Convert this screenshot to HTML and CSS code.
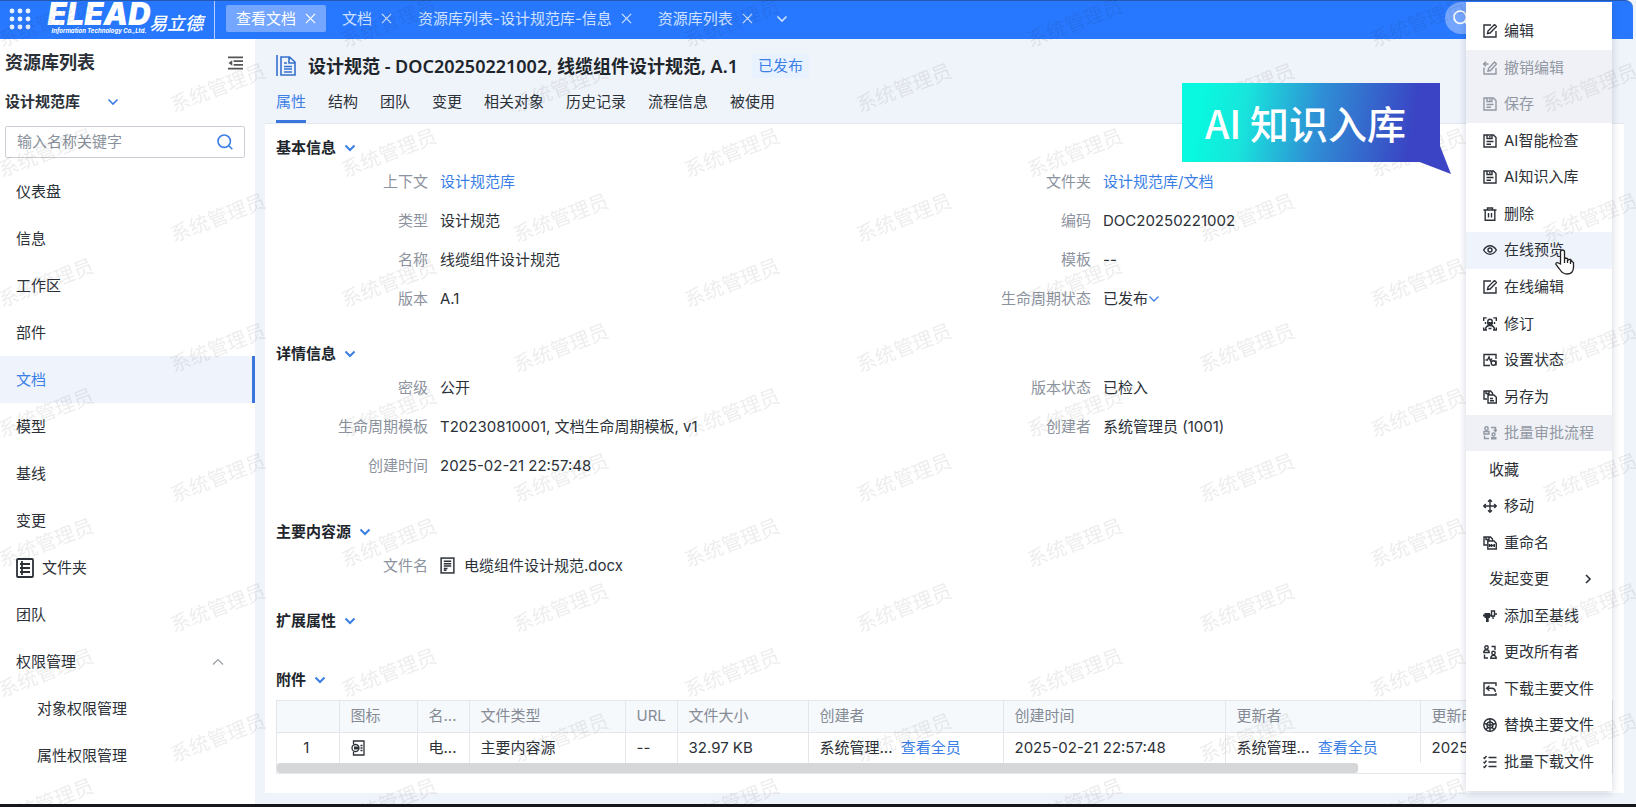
FILE: index.html
```html
<!DOCTYPE html>
<html lang="zh-CN">
<head>
<meta charset="utf-8">
<title>查看文档 - 易立德</title>
<link rel="stylesheet" href="styles.css">
</head>
<body>
<svg class="sprite" aria-hidden="true">
  <symbol id="i-down" viewBox="0 0 12 12"><path d="M1.5 3.5 6 8l4.500-4.500"/></symbol>
  <symbol id="i-up" viewBox="0 0 12 12"><path d="M1 8.500 6 3.500l5 5"/></symbol>
  <symbol id="i-right" viewBox="0 0 12 12"><path d="M4 2l4 4-4 4"/></symbol>
  <symbol id="i-x" viewBox="0 0 12 12"><path d="M1 1l10 10M11 1 1 11"/></symbol>
  <symbol id="i-search" viewBox="0 0 16 16"><circle cx="7.200" cy="7.200" r="6.200"/><path d="M11.800 11.800 15.300 15.300"/></symbol>
  <symbol id="i-edit" viewBox="0 0 14 14"><path d="M8 1H1v12h12V7M4.500 9.500 5 7l6.500-6.500 2 2L7 9z"/></symbol>
  <symbol id="i-undoedit" viewBox="0 0 14 14"><path d="M1 6.500V13h12V7M0.500 3h5M3 .8.600 3 3 5.200M5 10l.5-2.500 6-6.500 2 2L7.500 9.500z"/></symbol>
  <symbol id="i-save" viewBox="0 0 14 14"><path d="M1 1h9.500L13 3.500V13H1zM4 1v3.500h5V1M6.800 2v1.500M3.500 7.500h7M3.500 10.300h4.500"/></symbol>
  <symbol id="i-trash" viewBox="0 0 14 14"><path d="M.5 3h13M4.500 3V1h5v2M2.200 3v10.200h9.600V3M5.500 6v4.500M8.500 6v4.500"/></symbol>
  <symbol id="i-eye" viewBox="0 0 14 14"><path d="M.6 7C2.500 4 4.700 2.800 7 2.800S11.500 4 13.400 7C11.500 10 9.300 11.200 7 11.200S2.500 10 .6 7z"/><circle cx="7" cy="7" r="2"/></symbol>
  <symbol id="i-revise" viewBox="0 0 14 14"><path d="M.7 4V.9h3M10.300.9h3V4M.7 10.500V13H4M13.300 10.500V13H10M4.800 7V4.500a2.200 2.200 0 0 1 4.400 0V7M2.500 13c0-3 1-4.500 4.500-4.500s4.500 1.500 4.500 4.500M2.500 5v2M11.500 5v2M5.500 11.500h3"/><path class="solid" d="M4.500 5h5v4h-5z"/></symbol>
  <symbol id="i-state" viewBox="0 0 14 14"><path d="M13 6V1.500H1v11h6M2.500 7h2L6 4l1.500 4L9 5.500"/><circle cx="10.500" cy="10" r="2.300"/><path d="M13 7.500v5"/></symbol>
  <symbol id="i-copy" viewBox="0 0 14 14"><path d="M4 9H1V1h6.500L9.500 3v1.500M3 1v2.500h3V1M5 5h6l2.300 2.300V13H5zM7 8.500h3M7 10.800h4"/></symbol>
  <symbol id="i-rename" viewBox="0 0 14 14"><path d="M4 9H1V1h6.500L9.500 3v1.500M3 1v2.500h3V1M4.800 5h6.200l2.300 2.300V13H4.800zM6.500 8v3M8.500 8v3M6.500 9.500h5M11.300 8v3"/></symbol>
  <symbol id="i-flow" viewBox="0 0 14 14"><circle cx="3.500" cy="2.500" r="1.700"/><path d="M1 8V5.500h5V8zM8 1.500h4.500V5M10.800 3.500l1.700 2 1.300-2M1.500 9.500v3H6"/><circle cx="10.500" cy="8.500" r="1.500"/><path class="solid" d="M8 11h5.500v2.500H8z"/></symbol>
  <symbol id="i-move" viewBox="0 0 14 14"><path d="M7 1v12M1 7h12M5 2.800 7 .8l2 2M5 11.200l2 2 2-2M2.800 5l-2 2 2 2M11.200 5l2 2-2 2"/></symbol>
  <symbol id="i-base" viewBox="0 0 14 14"><path d="M8.500 2h3v5h-3zM10 7v3M11.500 5H14"/><path class="solid" d="M1.500 4H7v5H5.700v4H3V9H1.500zM0 5.500h2v2H0zM6.500 5.500h2v2h-2z"/></symbol>
  <symbol id="i-owner" viewBox="0 0 14 14"><circle cx="3.500" cy="2.500" r="1.700"/><path d="M.8 7.500c0-2 1-2.800 2.700-2.800s2.700.8 2.700 2.800zM8.500 1.500H12V5M1.500 9.500V13H5"/><circle cx="10.500" cy="8" r="1.700"/><path d="M7.800 13.200c0-2 1-2.800 2.700-2.800s2.700.8 2.700 2.800z"/></symbol>
  <symbol id="i-download" viewBox="0 0 14 14"><path d="M13 4V1H1v12h12v-2M6.500 3.800 3.500 6.300l3 2.500M3.800 6.300H9c2 0 3 1.200 3.500 3.500"/></symbol>
  <symbol id="i-replace" viewBox="0 0 14 14"><circle cx="7" cy="7" r="6.200"/><circle cx="7" cy="7" r="3"/><path d="M7 .8v3.500M7 10v3M1 5.500l3.300.7M13 5.500l-3.300.7M3 11.500l2-2.300M11 11.500 9 9.200M5 7h4M7 5v4"/></symbol>
  <symbol id="i-list" viewBox="0 0 14 14"><path d="M5.500 2.500h8M5.500 7h8M5.500 11.500h8M.5 2.500l1 1L3.500 1M.5 7l1 1 2-2.500M.5 11.500l1 1 2-2.500"/></symbol>
  <symbol id="i-file" viewBox="0 0 14 16"><rect x="1" y="1" width="12" height="14"/><path d="M3.500 4h7M3.500 6.300h7M3.500 8.500h7M3.500 10.800h3.500M3.500 12.500h2.500"/></symbol>
</svg>

<header class="topbar">
  <button class="apps" aria-label="应用"><svg viewBox="0 0 22 22"><g><circle cx="3" cy="3" r="2.400"/><circle cx="11" cy="3" r="2.400"/><circle cx="19" cy="3" r="2.400"/><circle cx="3" cy="11" r="2.400"/><circle cx="11" cy="11" r="2.400"/><circle cx="19" cy="11" r="2.400"/><circle cx="3" cy="19" r="2.400"/><circle cx="11" cy="19" r="2.400"/><circle cx="19" cy="19" r="2.400"/></g></svg></button>
  <a class="logo" href="#"><span class="logo-main"><b class="logo-word">ELEAD</b><small class="logo-sub">Information Technology Co.,Ltd.</small></span><span class="logo-cn">易立德</span></a>
  <nav class="worktabs">
    <a class="worktab current" href="#">查看文档<svg class="icon x"><use href="#i-x"/></svg></a>
    <a class="worktab" href="#">文档<svg class="icon x"><use href="#i-x"/></svg></a>
    <a class="worktab" href="#">资源库列表-设计规范库-信息<svg class="icon x"><use href="#i-x"/></svg></a>
    <a class="worktab" href="#">资源库列表<svg class="icon x"><use href="#i-x"/></svg></a>
    <button class="more" aria-label="更多"><svg class="icon chev"><use href="#i-down"/></svg></button>
  </nav>
  <button class="top-search" aria-label="搜索"><svg class="icon s16"><use href="#i-search"/></svg></button>
</header>

<div class="workspace">
  <aside class="sidebar">
    <div class="side-head"><h2>资源库列表</h2><button aria-label="收起"><svg class="icon fold" viewBox="0 0 16 14"><path d="M0 1h16M6 5h10M6 9h10M0 13h16"/><path class="solid" d="M4.500 4v6L.5 7z"/></svg></button></div>
    <button class="library">设计规范库<svg class="icon chev blue"><use href="#i-down"/></svg></button>
    <div class="search"><input type="text" aria-label="搜索名称" placeholder="输入名称关键字"><svg class="icon s16 blue"><use href="#i-search"/></svg></div>
    <nav class="menu">
      <a href="#">仪表盘</a>
      <a href="#">信息</a>
      <a href="#">工作区</a>
      <a href="#">部件</a>
      <a class="current" href="#">文档</a>
      <a href="#">模型</a>
      <a href="#">基线</a>
      <a href="#">变更</a>
      <a href="#"><svg class="icon folder" viewBox="0 0 18 20"><rect x="1" y="1" width="16" height="18" rx="1"/><path d="M6 3v14M4 6h10M4 10h10M4 14h10"/></svg>文件夹</a>
      <a href="#">团队</a>
      <a href="#">权限管理<svg class="icon chev end"><use href="#i-up"/></svg></a>
      <a class="sub" href="#">对象权限管理</a>
      <a class="sub" href="#">属性权限管理</a>
    </nav>
  </aside>

  <main class="content">
    <div class="doc-head">
      <div class="doc-title">
        <svg class="icon doc" viewBox="0 0 20 22"><path d="M1 0v21M5 2h8.500L19 7v13H5zM13 2v6h6M8 8h3M8 11.500h8M8 14h8M8 17h8"/></svg>
        <h1>设计规范 - DOC20250221002, 线缆组件设计规范, A.1</h1>
        <span class="badge">已发布</span>
      </div>
      <nav class="tabs">
        <a class="current" href="#">属性</a><a href="#">结构</a><a href="#">团队</a><a href="#">变更</a><a href="#">相关对象</a><a href="#">历史记录</a><a href="#">流程信息</a><a href="#">被使用</a>
      </nav>
    </div>
    <div class="panel">
      <section>
        <h3>基本信息<svg class="icon chev"><use href="#i-down"/></svg></h3>
        <div class="cols">
          <dl>
            <div><dt>上下文</dt><dd><a href="#">设计规范库</a></dd></div>
            <div><dt>类型</dt><dd>设计规范</dd></div>
            <div><dt>名称</dt><dd>线缆组件设计规范</dd></div>
            <div><dt>版本</dt><dd>A.1</dd></div>
          </dl>
          <dl>
            <div><dt>文件夹</dt><dd><a href="#">设计规范库/文档</a></dd></div>
            <div><dt>编码</dt><dd>DOC20250221002</dd></div>
            <div><dt>模板</dt><dd>--</dd></div>
            <div><dt>生命周期状态</dt><dd class="state">已发布<svg class="icon chev small"><use href="#i-down"/></svg></dd></div>
          </dl>
        </div>
      </section>
      <section>
        <h3>详情信息<svg class="icon chev"><use href="#i-down"/></svg></h3>
        <div class="cols">
          <dl>
            <div><dt>密级</dt><dd>公开</dd></div>
            <div><dt>生命周期模板</dt><dd>T20230810001, 文档生命周期模板, v1</dd></div>
            <div><dt>创建时间</dt><dd>2025-02-21 22:57:48</dd></div>
          </dl>
          <dl>
            <div><dt>版本状态</dt><dd>已检入</dd></div>
            <div><dt>创建者</dt><dd>系统管理员 (1001)</dd></div>
          </dl>
        </div>
      </section>
      <section class="wide">
        <h3>主要内容源<svg class="icon chev"><use href="#i-down"/></svg></h3>
        <div class="cols">
          <dl>
            <div><dt>文件名</dt><dd class="file"><svg class="icon page"><use href="#i-file"/></svg>电缆组件设计规范.docx</dd></div>
          </dl>
        </div>
      </section>
      <section>
        <h3>扩展属性<svg class="icon chev"><use href="#i-down"/></svg></h3>
      </section>
      <section class="wide">
        <h3>附件<svg class="icon chev"><use href="#i-down"/></svg></h3>
        <div class="table-wrap">
          <table>
            <colgroup><col class="c-no"><col class="c-icon"><col class="c-s"><col class="c-type"><col class="c-s"><col class="c-size"><col class="c-user"><col class="c-time"><col class="c-user"><col class="c-time"></colgroup>
            <thead><tr><th></th><th>图标</th><th>名...</th><th>文件类型</th><th>URL</th><th>文件大小</th><th>创建者</th><th>创建时间</th><th>更新者</th><th>更新时间</th></tr></thead>
            <tbody><tr><td class="num">1</td><td><svg class="icon page" viewBox="0 0 14 16"><path d="M2.500 4V1H13v14H2.500v-3M9.500 5.500h2M9.500 8h2M9.500 10.500h2"/><circle cx="4.500" cy="8" r="3.500"/><path class="solid" d="M3 6.500h5v3H3z"/></svg></td><td>电...</td><td>主要内容源</td><td>--</td><td>32.97 KB</td><td>系统管理... <a href="#">查看全员</a></td><td>2025-02-21 22:57:48</td><td>系统管理... <a href="#">查看全员</a></td><td>2025-02-21 22:57:48</td></tr></tbody>
          </table>
          <div class="scroll"><div class="thumb"></div></div>
        </div>
      </section>
    </div>
  </main>
</div>

<div class="actions" role="menu">
  <button role="menuitem"><svg class="icon"><use href="#i-edit"/></svg>编辑</button>
  <button role="menuitem" disabled><svg class="icon"><use href="#i-undoedit"/></svg>撤销编辑</button>
  <button role="menuitem" disabled><svg class="icon"><use href="#i-save"/></svg>保存</button>
  <button role="menuitem"><svg class="icon"><use href="#i-save"/></svg>AI智能检查</button>
  <button role="menuitem"><svg class="icon"><use href="#i-save"/></svg>AI知识入库</button>
  <button role="menuitem"><svg class="icon"><use href="#i-trash"/></svg>删除</button>
  <button role="menuitem" class="hover"><svg class="icon"><use href="#i-eye"/></svg>在线预览</button>
  <button role="menuitem"><svg class="icon"><use href="#i-edit"/></svg>在线编辑</button>
  <button role="menuitem"><svg class="icon"><use href="#i-revise"/></svg>修订</button>
  <button role="menuitem"><svg class="icon"><use href="#i-state"/></svg>设置状态</button>
  <button role="menuitem"><svg class="icon"><use href="#i-copy"/></svg>另存为</button>
  <button role="menuitem" disabled><svg class="icon"><use href="#i-flow"/></svg>批量审批流程</button>
  <button role="menuitem" class="plain">收藏</button>
  <button role="menuitem"><svg class="icon"><use href="#i-move"/></svg>移动</button>
  <button role="menuitem"><svg class="icon"><use href="#i-rename"/></svg>重命名</button>
  <button role="menuitem" class="plain">发起变更<svg class="icon chev end"><use href="#i-right"/></svg></button>
  <button role="menuitem"><svg class="icon"><use href="#i-base"/></svg>添加至基线</button>
  <button role="menuitem"><svg class="icon"><use href="#i-owner"/></svg>更改所有者</button>
  <button role="menuitem"><svg class="icon"><use href="#i-download"/></svg>下载主要文件</button>
  <button role="menuitem"><svg class="icon"><use href="#i-replace"/></svg>替换主要文件</button>
  <button role="menuitem"><svg class="icon"><use href="#i-list"/></svg>批量下载文件</button>
</div>

<svg class="watermark" aria-hidden="true">
  <defs><pattern id="wm" width="343" height="130" patternUnits="userSpaceOnUse">
    <g class="wm-text">
      <text transform="translate(218 88) rotate(-21)">系统管理员</text>
      <text transform="translate(46 23) rotate(-21)">系统管理员</text>
      <text transform="translate(46 153) rotate(-21)">系统管理员</text>
      <text transform="translate(389 23) rotate(-21)">系统管理员</text>
      <text transform="translate(389 153) rotate(-21)">系统管理员</text>
    </g>
  </pattern></defs>
  <rect width="100%" height="100%" fill="url(#wm)"/>
</svg>

<div class="callout">AI 知识入库<svg class="tail" viewBox="0 0 34 28"><path d="M23 0 34 28 0 15z"/></svg></div>
<svg class="cursor" viewBox="0 0 20 26" aria-hidden="true"><path d="M5.500 15V3a2 2 0 0 1 4 0v7l1-1 2 .5 1 1.500 1.500-.8 1.500 1.300.5 1 1.500 1V18c0 4-2 7-6.500 7-4 0-6-2.500-7.500-5L1 15.500c-.5-1.500 1-2.500 2.500-1.500zM9.500 10v4M12.500 10.500V14M15.500 11.500V15"/></svg>
</body>
</html>
```

FILE: styles.css
```css
* { box-sizing: border-box; }

body {
  margin: 0;
  height: 100vh;
  display: flex;
  flex-direction: column;
  position: relative;
  overflow: hidden;
  border-bottom: 3px solid #15171b;
  background: #eff3fa;
  color: #2c3138;
  font: 15px/24px Inter, "Noto Sans CJK SC", sans-serif;
}

a { color: inherit; text-decoration: none; }
button { font: inherit; color: inherit; background: none; border: 0; padding: 0; text-align: left; }
h1, h2, h3, dl, dd { margin: 0; }

.sprite { position: absolute; width: 0; height: 0; }
.icon { width: 14px; height: 14px; flex: none; fill: none; stroke: currentColor; stroke-width: 1.4; }
.icon .solid, .solid { fill: currentColor; stroke: none; }
.x { width: 11px; height: 11px; stroke-width: 1.3; }
.chev { width: 12px; height: 12px; stroke-width: 1.6; }
.s16 { width: 16px; height: 16px; stroke-width: 1.6; }
.blue { color: #3b7fe6; }
.end { margin-left: auto; }

/* top bar */
.topbar {
  height: 39px;
  flex: none;
  display: flex;
  border-top: 1px solid #2459b0;
  background: #2878ff;
  color: #cfe1ff;
  margin-right: 3px;
  border-top-right-radius: 8px;
}
.apps { padding: 0 16px 3px 9px; }
.apps svg { display: block; width: 22px; height: 22px; fill: #e9f2ff; }
.logo { display: flex; width: 168px; padding-left: 2px; color: #fff; font-style: italic; border-right: 1px solid #b5d0ff; }
.logo-main { display: flex; flex-direction: column; align-items: center; width: 100px; }
.logo-word { font-size: 31px; line-height: 26px; font-weight: 900; }
.logo-sub { font-size: 6px; line-height: 7px; font-weight: 700; white-space: nowrap; }
.logo-cn { font-size: 18px; line-height: 24px; font-weight: 500; padding-top: 11px; }
.worktabs { display: flex; align-items: center; gap: 6px; padding: 0 0 3px 11px; }
.worktab { display: flex; align-items: center; gap: 9px; height: 27px; padding: 0 10px; border-radius: 2px; }
.worktab.current { background: #74a6ff; color: #fff; }
.more { display: flex; padding-left: 7px; }
.top-search { margin: 1px 88px 0 auto; width: 100px; height: 32px; padding-left: 8px; border-radius: 16px; background: #74a6ff; color: #fff; }
.top-search .icon { display: block; }

/* layout */
.workspace { flex: 1; min-height: 0; display: flex; }
.sidebar { width: 255px; flex: none; background: #fff; display: flex; flex-direction: column; }
.content { flex: 1; min-width: 0; display: flex; flex-direction: column; padding: 0 12px 11px 10px; }

/* sidebar */
.side-head { display: flex; justify-content: space-between; align-items: center; padding: 11px 12px 0 5px; }
.side-head h2 { font-size: 18px; line-height: 26px; }
.fold { display: block; width: 15px; height: 14px; color: #555; stroke-width: 2; }
.library { display: flex; align-items: center; gap: 27px; padding: 14px 5px 12px; font-weight: 700; }
.search { display: flex; align-items: center; margin: 0 10px 10px 5px; height: 32px; padding: 0 11px; border: 1px solid #ccd0d6; border-radius: 2px; }
.search input { flex: 1; min-width: 0; border: 0; outline: 0; padding: 0; font: inherit; background: none; }
.search input::placeholder { color: #8a919c; opacity: 1; }
.menu a { display: flex; align-items: center; gap: 8px; height: 47px; padding: 0 31px 0 16px; }
.menu .current { background: #eff3fb; color: #3b7fe6; border-right: 3px solid #3a76dd; }
.menu .sub { padding-left: 37px; }
.menu .end { color: #9aa0a8; stroke-width: 1.2; }
.folder { width: 18px; height: 20px; stroke-width: 1.8; }

/* document heading */
.doc-head { padding: 14px 11px 0; border-bottom: 1px solid #e4e7ed; }
.doc-title { display: flex; align-items: center; }
.doc { width: 20px; height: 22px; color: #3471cf; margin-right: 12px; stroke-width: 1.6; }
.doc-title h1 { font: 600 18px/26px "Noto Sans", "Noto Sans CJK SC", sans-serif; color: #20252c; }
.badge { margin-left: 14px; padding: 0 6px; background: #e8f2ff; color: #3b7fe6; border-radius: 2px; }
.tabs { display: flex; gap: 22px; padding-top: 11px; }
.tabs a { height: 33px; }
.tabs .current { color: #3b7fe6; border-bottom: 3px solid #3a76dd; }

/* property panel */
.panel { flex: 1; min-height: 0; background: #fff; padding: 12px 11px 0; overflow: hidden; }
section + section { margin-top: 24px; }
section + .wide { margin-top: 35px; }
h3 { display: flex; align-items: center; gap: 8px; font-size: 15px; line-height: 24px; color: #20252c; }
h3 .chev { color: #3b7fe6; stroke-width: 2; }
.cols { display: grid; grid-template-columns: 1fr 1fr; padding: 2px 11px 0 0; }
dl > div { display: grid; grid-template-columns: 152px 1fr; gap: 12px; align-items: center; height: 39px; }
dt { text-align: right; color: #8d939e; }
dd a, td a { color: #3b7fe6; }
.state, .file { display: flex; align-items: center; }
.file { gap: 9px; }
.small { width: 12px; height: 12px; color: #3b7fe6; stroke-width: 1.3; }
.page { width: 15px; height: 17px; }

/* attachments */
.table-wrap { margin-top: 8px; overflow: hidden; border: 1px solid #e3e6ea; }
table { table-layout: fixed; width: 1365px; border-collapse: collapse; white-space: nowrap; }
th, td { height: 31px; padding: 0 11px; text-align: left; border-right: 1px solid #e3e6ea; overflow: hidden; }
th { font-weight: 400; color: #858b95; background: #f6f9fc; border-bottom: 1px solid #e3e6ea; }
td .icon { display: block; width: 14px; height: 16px; stroke-width: 1.3; }
td a { margin-left: 4px; }
.num { text-align: center; padding-right: 14px; }
.c-no { width: 62px; }
.c-icon { width: 78px; }
.c-s { width: 52px; }
.c-type { width: 156px; }
.c-size { width: 131px; }
.c-user { width: 195px; }
.c-time { width: 222px; }
.scroll { height: 10px; }
.thumb { width: 81%; height: 10px; background: #d6d7d9; border-radius: 3px; }

/* action menu */
.actions {
  position: absolute;
  top: 2px;
  right: 24px;
  bottom: 13px;
  width: 146px;
  display: flex;
  flex-direction: column;
  padding: 11px 0;
  background: #fff;
  box-shadow: 0 2px 8px rgba(30, 50, 90, 0.2);
}
.actions button { flex: 1; display: flex; align-items: center; gap: 7px; padding: 0 18px 0 17px; white-space: nowrap; }
.actions button:disabled { background: #eff1f6; color: #9298a3; }
.actions .hover { background: #eff3fb; }
.actions .plain { padding-left: 23px; }

.watermark { position: absolute; top: 0; left: 0; width: 100%; height: 100%; pointer-events: none; }
.wm-text { font-size: 20px; fill: #000; fill-opacity: 0.07; text-anchor: middle; dominant-baseline: central; }

.callout {
  position: absolute;
  top: 83px;
  right: 196px;
  padding: 0 34px 0 23px;
  font: 500 39px/79px "Noto Sans CJK SC", sans-serif;
  color: #fff;
  background: linear-gradient(100deg, #08f9df 8%, #18e4dc 25%, #2f8fd5 52%, #3a44c4 88%);
}
.tail { position: absolute; right: -11px; bottom: -12px; width: 34px; height: 28px; fill: #3a44c4; }
.cursor { position: absolute; top: 249px; right: 61px; width: 20px; height: 26px; fill: #fff; stroke: #222; stroke-width: 1.3; }
```
